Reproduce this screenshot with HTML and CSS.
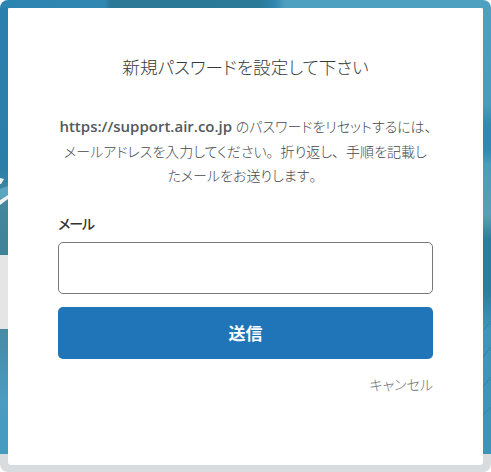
FILE: index.html
```html
<!DOCTYPE html>
<html lang="ja">
<head>
<meta charset="utf-8">
<title>新規パスワードを設定して下さい</title>
<link rel="stylesheet" href="styles.css">
</head>
<body>
<div class="frame">
  <svg class="mark mark-left" viewBox="0 0 8 40" aria-hidden="true">
    <path class="mark-white" d="M0 8 L4 9 L1 14 L0 14 Z"/>
    <path class="mark-pale" d="M0 19 L8 16 L8 25 L0 29 Z"/>
    <path class="mark-white" d="M0 30 L8 25 L8 29 L0 35 Z"/>
  </svg>
  <svg class="mark mark-right" viewBox="0 0 8 150" aria-hidden="true">
    <path class="mark-line" d="M0 12 L8 4 M0 36 L8 26 M0 62 L8 52 M0 92 L8 82 M0 120 L8 112"/>
  </svg>
  <main class="card">
    <h1 class="title">新規パスワードを設定して下さい</h1>
    <p class="intro"><strong class="site">https://support.air.co.jp</strong> のパスワードをリセットするには、<br>メールアドレスを入力してください<span class="punct">。</span>折り返し<span class="punct">、</span>手順を記載し<br>たメールをお送りします<span class="punct">。</span></p>
    <form class="form">
      <label class="label" for="email">メール</label>
      <input class="input" id="email" type="email">
      <button class="submit" type="button">送信</button>
      <a class="cancel" href="#">キャンセル</a>
    </form>
  </main>
</div>
</body>
</html>
```
FILE: styles.css
```css
* { box-sizing: border-box; }
html, body { margin: 0; height: 100%; background: #fff; }
body {
  font-family: "Open Sans", "Noto Sans CJK JP", sans-serif;
  font-feature-settings: "palt";
  color: #46494d;
  overflow: hidden;
}
.frame {
  position: relative;
  width: 491px;
  height: 472px;
  padding: 8px 8px 7px;
  border-radius: 8px;
  background-color: #d9dcde;
  background-image:
    linear-gradient(to right, #2c84b0 0, #2f87b2 105px, #2a7896 110px, #2a7a98 260px, #2f86b0 275px, #4ea0c0 285px, #4ea0c0 100%),
    linear-gradient(to bottom, #2a80ae 0, #2b7ea8 170px, #45899f 195px, #3f8297 255px, #e5e5e5 255px, #e5e5e5 329px, #478aa5 329px, #4a9cc0 400px, #459ac0 454px, #d9dcde 454px),
    linear-gradient(to bottom, #4ea0c0 0, #4a9cbd 105px, #2f89b0 125px, #2f89b0 150px, #4a9dbd 165px, #5a9fb5 215px, #2b7d9d 240px, #2b7d9d 290px, #3f95bb 330px, #3d93b9 454px, #d9dcde 454px);
  background-size: 100% 8px, 8px 100%, 8px 100%;
  background-position: 0 0, 0 0, 100% 0;
  background-repeat: no-repeat;
}
.mark { position: absolute; width: 8px; }
.mark-left { left: 0; top: 170px; height: 40px; }
.mark-right { right: 0; top: 295px; height: 150px; }
.mark-white { fill: #eef2f3; }
.mark-pale { fill: #5ba6c0; }
.mark-line { fill: none; stroke: #2f86ac; stroke-width: 1; }
.card {
  height: 457px;
  padding: 47px 50px 0;
  background: #fff;
  border-radius: 3px;
}
.title {
  margin: 0;
  font-size: 17.6px;
  font-weight: 300;
  line-height: 24px;
  text-align: center;
  color: #36393c;
}
.intro {
  margin: 35px 0 0;
  font-size: 14px;
  font-weight: 300;
  line-height: 24.5px;
  text-align: center;
  white-space: nowrap;
}
.site { font-size: 15px; font-weight: 600; color: #54585c; }
.punct { font-feature-settings: normal; }
.form { display: flex; flex-direction: column; margin-top: 25px; }
.label {
  font-size: 14px;
  font-weight: 500;
  letter-spacing: -1px;
  line-height: 20px;
  color: #333;
}
.input {
  height: 52px;
  margin-top: 8px;
  border: 1px solid #76787a;
  border-radius: 5px;
  background: #fff;
}
.submit {
  height: 52px;
  margin-top: 13px;
  border: 0;
  border-radius: 5px;
  background: #2074b8;
  color: #fff;
  font: 700 17px "Open Sans", "Noto Sans CJK JP", sans-serif;
}
.cancel {
  margin-top: 16px;
  align-self: flex-end;
  font-size: 14px;
  font-weight: 300;
  line-height: 20px;
  color: #6f7174;
  text-decoration: none;
}
```
